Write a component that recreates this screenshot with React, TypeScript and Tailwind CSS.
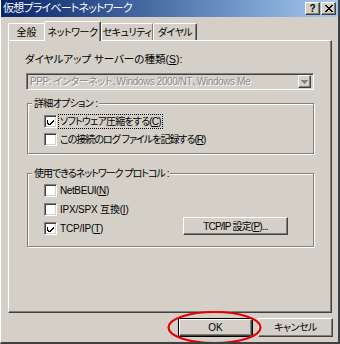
import React from 'react';

const font = "[font-family:'Liberation_Sans','Noto_Sans_CJK_JP',sans-serif] [font-feature-settings:'palt']";

// 凹んだ枠 (チェックボックス・コンボ)
const sunken = 'border-t border-l border-t-[#808080] border-l-[#808080] border-b border-r border-b-white border-r-white shadow-[inset_1px_1px_0_#404040,inset_-1px_-1px_0_#d4d0c8]';
// 出っ張った枠 (ボタン)
const raised = 'border-t border-l border-t-white border-l-white border-b border-r border-b-[#404040] border-r-[#404040] shadow-[inset_-1px_-1px_0_#808080]';

function U({ c }: { c: string }) {
  return <span className="underline underline-offset-[1px]">{c}</span>;
}

function CheckBox({ checked, children, focus, className = '' }: { checked?: boolean; children: React.ReactNode; focus?: boolean; className?: string }) {
  return (
    <div className="flex items-center">
      <span className={`w-[13px] h-[13px] bg-white flex items-center justify-center shrink-0 ${sunken}`}>
        {checked && (
          <svg width="7" height="7" viewBox="0 0 7 7" shapeRendering="crispEdges">
            <path d="M0 2h1v3h1v1h1v-1h1v-1h1v-1h1v-1h1v2h-1v1h-1v1h-1v1h-1v1h-1v-1h-1v-1h-1z" fill="#000" />
          </svg>
        )}
      </span>
      <span className={`ml-[1px] px-[1px] whitespace-nowrap border border-dotted ${focus ? 'border-black' : 'border-transparent'} ${className}`}>
        {children}
      </span>
    </div>
  );
}

function GroupBox({ label, className, labelClass = '', children }: { label: string; className: string; labelClass?: string; children: React.ReactNode }) {
  return (
    <div className={`relative border border-[#808080] shadow-[1px_1px_0_#fff,inset_1px_1px_0_#fff] ${className}`}>
      <span className={`absolute left-[4px] top-[-7px] px-[2px] bg-[#d4d0c8] leading-[13px] whitespace-nowrap ${labelClass}`}>{label}</span>
      {children}
    </div>
  );
}

export default function App() {
  return (
    <div className={`relative w-[340px] h-[344px] bg-[#d4d0c8] text-[10px] leading-[13px] text-black ${font} border-l border-l-white border-r-2 border-r-[#404040] border-b-2 border-b-[#404040] overflow-hidden`}>
      {/* タイトルバー */}
      <div className="h-[17px] flex items-center bg-linear-to-r from-[#0a246a] to-[#a6caf0] pl-[2px] pr-[2px]">
        <span className="text-white text-[11px] tracking-[-0.8px] whitespace-nowrap">仮想プライベートネットワーク</span>
        <div className="ml-auto flex gap-[1px]">
          <span className={`w-[15px] h-[13px] bg-[#d4d0c8] flex items-center justify-center text-[10px] font-bold leading-none ${raised}`}>?</span>
          <span className={`w-[15px] h-[13px] bg-[#d4d0c8] flex items-center justify-center ${raised}`}>
            <svg width="8" height="7" viewBox="0 0 8 7" shapeRendering="crispEdges">
              <path d="M0 0h2v1h1v1h2v-1h1v-1h2v1h-1v1h-1v1h-1v1h1v1h1v1h1v1h-2v-1h-1v-1h-2v1h-1v1h-2v-1h1v-1h1v-1h1v-1h-1v-1h-1v-1h-1z" fill="#000" />
            </svg>
          </span>
        </div>
      </div>

      {/* タブ */}
      <div className="flex items-end h-[19px] mt-[4px] ml-[7px] relative z-10 whitespace-nowrap">
        <div className="h-[17px] w-[37px] flex items-center justify-center border-t border-l border-white border-r border-r-[#808080] rounded-t-[2px]">全般</div>
        <div className="h-[20px] w-[57px] -ml-[1px] mb-[-1px] flex items-start pt-[4px] justify-center bg-[#d4d0c8] border-t border-l border-white border-r border-r-[#404040] shadow-[inset_-1px_0_0_#808080] rounded-t-[2px] tracking-[-0.5px]">ネットワーク</div>
        <div className="h-[17px] w-[52px] flex items-center justify-center border-t border-l border-white border-r border-r-[#808080] rounded-t-[2px] tracking-[-0.5px]">セキュリティ</div>
        <div className="h-[17px] w-[44px] flex items-center justify-center border-t border-l border-white border-r border-r-[#404040] shadow-[inset_-1px_0_0_#808080] rounded-t-[2px] tracking-[-0.5px]">ダイヤル</div>
      </div>

      {/* タブパネル */}
      <div className="ml-[7px] w-[324px] h-[273px] border-t border-l border-white border-r border-b border-r-[#404040] border-b-[#404040] shadow-[inset_-1px_-1px_0_#808080] pl-[16px] pt-[12px]">
        <div className="whitespace-nowrap text-[10.5px]">
          ダイヤルアップ サーバーの種類(<U c="S" />):
        </div>

        <div className={`mt-[7px] ml-[1px] w-[288px] h-[17px] bg-[#d4d0c8] flex items-center pl-[3px] pr-[2px] ${sunken}`}>
          <span className="text-[#8a8a8a] whitespace-nowrap tracking-[-0.4px] [text-shadow:1px_1px_0_#fff]">PPP: インターネット、Windows 2000/NT、Windows Me</span>
          <span className={`ml-auto w-[13px] h-[13px] bg-[#d4d0c8] flex items-center justify-center ${raised}`}>
            <svg width="7" height="4" viewBox="0 0 7 4" shapeRendering="crispEdges">
              <path d="M0 0h7v1h-1v1h-1v1h-1v1h-1v-1h-1v-1h-1v-1h-1z" fill="#808080" />
            </svg>
          </span>
        </div>

        <GroupBox label="詳細オプション :" labelClass="tracking-[-0.7px]" className="mt-[13px] ml-[2px] w-[287px] h-[51px] pl-[16px] pt-[8px]">
          <div className="flex flex-col">
            <div className="h-[18px] flex items-center">
              <CheckBox checked focus className="tracking-[-0.8px]">ソフトウェア圧縮をする(<U c="C" />)</CheckBox>
            </div>
            <div className="h-[18px] flex items-center">
              <CheckBox className="tracking-[-1px]">この接続のログ ファイルを記録する(<U c="R" />)</CheckBox>
            </div>
          </div>
        </GroupBox>

        <GroupBox label="使用できるネットワーク プロトコル :" labelClass="tracking-[-1px]" className="mt-[19px] ml-[2px] w-[287px] h-[74px] pl-[16px] pt-[7px]">
          <div className="flex flex-col">
            <div className="h-[19px] flex items-center">
              <CheckBox className="tracking-[-0.4px]">NetBEUI(<U c="N" />)</CheckBox>
            </div>
            <div className="h-[19px] flex items-center">
              <CheckBox className="tracking-[-0.2px]">IPX/SPX 互換(<U c="I" />)</CheckBox>
            </div>
            <div className="h-[19px] flex items-center">
              <div className="w-[139px]">
                <CheckBox checked className="tracking-[-0.2px]">TCP/IP(<U c="T" />)</CheckBox>
              </div>
              <div className={`w-[105px] h-[18px] -mt-[5px] flex items-center justify-center bg-[#d4d0c8] whitespace-nowrap tracking-[-0.8px] ${raised}`}>
                TCP/IP 設定(<U c="P" />)...
              </div>
            </div>
          </div>
        </GroupBox>
      </div>

      {/* 下部ボタン */}
      <div className="flex justify-end gap-[5px] mt-[5px] pr-[5px]">
        <div className="w-[75px] h-[19px] border border-black">
          <div className={`w-full h-full flex items-center justify-center ${raised}`}>OK</div>
        </div>
        <div className={`w-[75px] h-[19px] flex items-center justify-center tracking-[-0.5px] ${raised}`}>キャンセル</div>
      </div>

      {/* 赤丸 (注釈) */}
      <svg className="absolute left-[166px] top-[310px]" width="96" height="36" viewBox="0 0 96 36">
        <ellipse cx="47.5" cy="17.5" rx="46" ry="15.5" fill="none" stroke="#e80000" strokeWidth="2.2" />
      </svg>
    </div>
  );
}
